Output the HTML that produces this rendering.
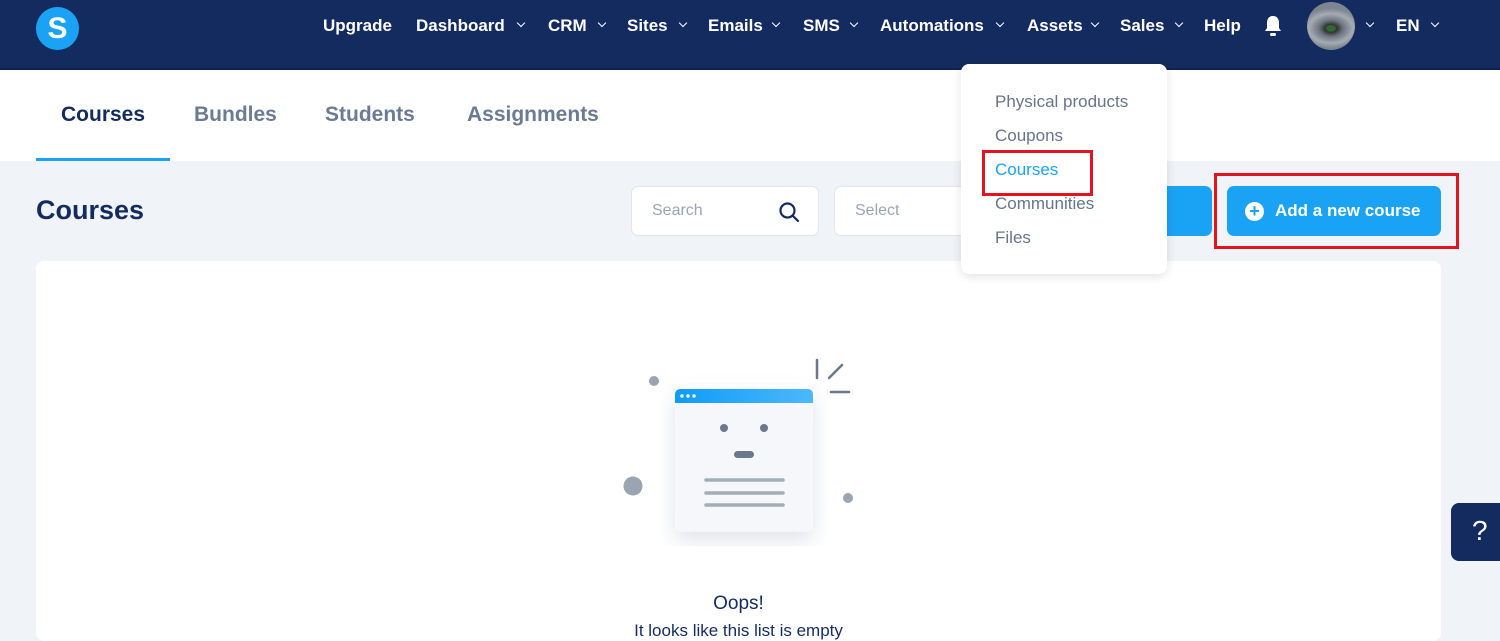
<!DOCTYPE html>
<html><head><meta charset="utf-8"><style>
*{box-sizing:border-box;margin:0;padding:0}
body{width:1500px;height:628px;overflow:hidden;background:#f0f3f7;font-family:"Liberation Sans",sans-serif;position:relative}
.nav{position:absolute;left:0;top:0;width:1500px;height:70px;background:#142b5f;border-bottom:2px solid #0e2250}
.n{position:absolute;top:16px;color:#fff;font-weight:bold;font-size:17px}
.ch{position:absolute;top:20px;width:6px;height:6px;border-right:1.5px solid #fff;border-bottom:1.5px solid #fff;transform:rotate(45deg)}
.tabs{position:absolute;top:70px;left:0;width:1500px;height:91px;background:#fff}
.t{position:absolute;top:33px;font-size:21px;font-weight:bold;color:#6b7b93}
.abs{position:absolute}
.menu{position:absolute;left:961px;top:64px;width:206px;height:210px;background:#fff;border-radius:8px;box-shadow:0 2px 10px rgba(0,0,0,.12)}
.mi{position:absolute;left:34px;font-size:17px;color:#66758c}
</style></head><body>
<div class="nav">
 <div class="abs" style="left:36px;top:7px;width:43px;height:43px;border-radius:50%;background:#1aa3f5;color:#fff;font-weight:bold;font-size:30px;text-align:center;line-height:43px">S</div>
 <span class="n" style="left:323px">Upgrade</span>
 <span class="n" style="left:416px">Dashboard</span><i class="ch" style="left:518px"></i>
 <span class="n" style="left:548px">CRM</span><i class="ch" style="left:599px"></i>
 <span class="n" style="left:627px">Sites</span><i class="ch" style="left:680px"></i>
 <span class="n" style="left:708px">Emails</span><i class="ch" style="left:773px"></i>
 <span class="n" style="left:803px">SMS</span><i class="ch" style="left:851px"></i>
 <span class="n" style="left:880px">Automations</span><i class="ch" style="left:997px"></i>
 <span class="n" style="left:1027px">Assets</span><i class="ch" style="left:1092px"></i>
 <span class="n" style="left:1120px">Sales</span><i class="ch" style="left:1176px"></i>
 <span class="n" style="left:1204px">Help</span>
 <svg class="abs" style="left:1262px;top:14px" width="22" height="24" viewBox="0 0 22 24"><path d="M11 2c-4 0-6 3-6 7v5l-2 3h16l-2-3V9c0-4-2-7-6-7z" fill="#fff"/><rect x="8" y="19" width="6" height="3" rx="1.5" fill="#fff"/></svg>
 <div class="abs" style="left:1307px;top:2px;width:48px;height:48px;border-radius:50%;background:radial-gradient(ellipse 60% 40% at 50% 55%,#2f6a33 0 4px,#333 6px,#6d7480 12px,#a6abb3 22px,#7d8590 30px)"></div>
 <i class="ch" style="left:1367px"></i>
 <span class="n" style="left:1396px">EN</span><i class="ch" style="left:1432px"></i>
</div>
<div class="tabs">
 <span class="t" style="left:61px;color:#142b5f">Courses</span>
 <span class="t" style="left:194px">Bundles</span>
 <span class="t" style="left:325px">Students</span>
 <span class="t" style="left:467px">Assignments</span>
 <div class="abs" style="left:36px;top:88px;width:134px;height:3px;background:#1aa3f5"></div>
</div>
<div class="abs" style="left:36px;top:195px;font-size:27px;font-weight:bold;color:#142b5f">Courses</div>
<div class="abs" style="left:631px;top:186px;width:188px;height:50px;background:#fff;border:1px solid #e1e6ed;border-radius:7px"><span class="abs" style="left:20px;top:15px;font-size:16px;color:#9aa5b4">Search</span>
<svg class="abs" style="left:146px;top:14px" width="22" height="22" viewBox="0 0 22 22"><circle cx="9.5" cy="9.5" r="7" stroke="#142b5f" stroke-width="2.2" fill="none"/><path d="M15 15l5 5" stroke="#142b5f" stroke-width="2.2" stroke-linecap="round"/></svg></div>
<div class="abs" style="left:834px;top:186px;width:140px;height:50px;background:#fff;border:1px solid #e1e6ed;border-radius:7px"><span class="abs" style="left:20px;top:15px;font-size:16px;color:#9aa5b4">Select</span></div>
<div class="abs" style="left:1150px;top:186px;width:62px;height:50px;background:#1aa3f5;border-radius:7px"></div>
<div class="abs" style="left:1214px;top:173px;width:245px;height:76px;border:3px solid #e3141d"></div>
<div class="abs" style="left:1227px;top:186px;width:214px;height:50px;background:#1aa3f5;border-radius:7px;color:#fff;font-size:17px;font-weight:bold">
 <div class="abs" style="left:18px;top:16px;width:19px;height:19px;border-radius:50%;background:#fff;color:#1aa3f5;text-align:center;line-height:19px;font-size:18px">+</div>
 <span class="abs" style="left:48px;top:15px">Add a new course</span></div>
<div class="abs" style="left:36px;top:261px;width:1405px;height:380px;background:#fff;border-radius:8px"></div>
<div class="menu">
 <span class="mi" style="top:28px">Physical products</span>
 <span class="mi" style="top:62px">Coupons</span>
 <span class="mi" style="top:96px;color:#1aa3f5">Courses</span>
 <span class="mi" style="top:130px">Communities</span>
 <span class="mi" style="top:164px">Files</span>
</div>
<div class="abs" style="left:982px;top:150px;width:111px;height:46px;border:3px solid #e3141d"></div>
<svg class="abs" style="left:600px;top:350px" width="280" height="200" viewBox="600 350 280 200">
 <defs><linearGradient id="g" x1="0" x2="1"><stop offset="0" stop-color="#0e9cf7"/><stop offset="1" stop-color="#4cb8fb"/></linearGradient>
 <filter id="s"><feDropShadow dx="0" dy="8" stdDeviation="10" flood-color="#8090a8" flood-opacity=".25"/></filter></defs>
 <circle cx="654" cy="381" r="5" fill="#9aa5b1"/><circle cx="633" cy="486" r="9.5" fill="#9aa5b1"/><circle cx="848" cy="498" r="5" fill="#9aa5b1"/>
 <path d="M817 360v18M829 378l13-13M831 392h18" stroke="#6b778a" stroke-width="2.5" stroke-linecap="round"/>
 <rect x="675" y="389" width="138" height="143" rx="5" fill="#f6f7fa" filter="url(#s)"/>
 <path d="M680 389h128a5 5 0 0 1 5 5v9h-138v-9a5 5 0 0 1 5-5z" fill="url(#g)"/>
 <circle cx="682" cy="396" r="1.7" fill="#fff"/><circle cx="688" cy="396" r="1.7" fill="#fff"/><circle cx="694" cy="396" r="1.7" fill="#fff"/>
 <circle cx="724" cy="428" r="4" fill="#6b778a"/><circle cx="764" cy="428" r="4" fill="#6b778a"/>
 <rect x="734" y="451" width="20" height="7" rx="3.5" fill="#6b778a"/>
 <path d="M706 480h77M706 493h77M706 505h77" stroke="#a3adb8" stroke-width="3.5" stroke-linecap="round"/>
</svg>
<div class="abs" style="left:0;width:1477px;top:593px;text-align:center;font-size:19px;color:#142b5f">Oops!</div>
<div class="abs" style="left:0;width:1477px;top:621px;text-align:center;font-size:17px;color:#142b5f">It looks like this list is empty</div>
<div class="abs" style="left:1451px;top:503px;width:60px;height:58px;background:#142b5f;border-radius:8px;color:#fff;font-size:28px;padding:12px 0 0 21px">?</div>
</body></html>
